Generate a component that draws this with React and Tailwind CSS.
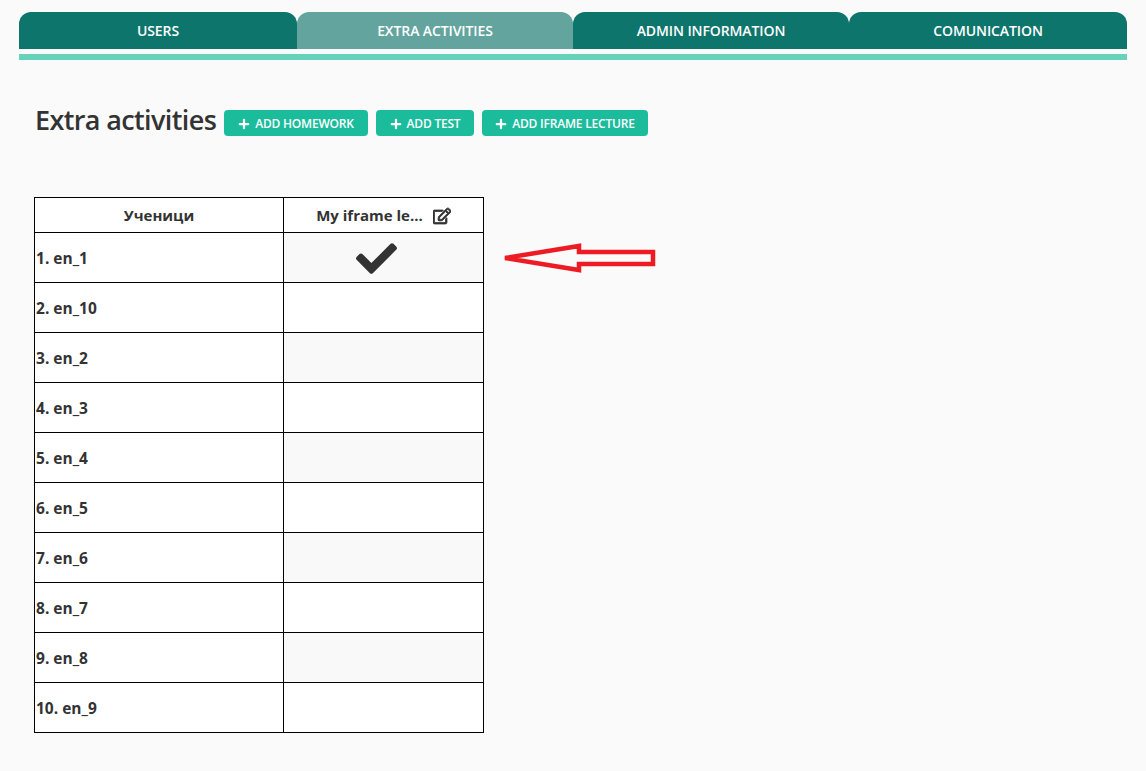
import React from "react";
import { FaCheck, FaPlus, FaRegEdit } from "react-icons/fa";

const tabs = [
  { label: "USERS", width: "w-[278px]" },
  { label: "EXTRA ACTIVITIES", width: "w-[276px]", active: true },
  { label: "ADMIN INFORMATION", width: "w-[276px]" },
  { label: "COMUNICATION", width: "w-[278px]" },
];

const students = ["en_1", "en_10", "en_2", "en_3", "en_4", "en_5", "en_6", "en_7", "en_8", "en_9"];

function AddButton({ label, width }) {
  return (
    <button className={`flex h-[26px] items-center justify-center gap-[5px] rounded-[4px] bg-[#1abc9c] pt-[1px] text-[12px] font-semibold tracking-[-0.2px] text-white ${width}`}>
      <FaPlus size={12} />
      {label}
    </button>
  );
}

export default function App() {
  return (
    <div className="relative h-[771px] w-[1146px] overflow-hidden bg-[#fafafa] pt-3 font-['Open_Sans',sans-serif] text-[#333]">
      {/* Tabs */}
      <div className="ml-[19px] flex w-[1108px]">
        {tabs.map((t) => (
          <div
            key={t.label}
            className={`flex h-[37px] items-center justify-center rounded-t-[12px] text-[14px] font-semibold tracking-[-0.1px] text-white ${t.width} ${t.active ? "bg-[#63a59e]" : "bg-[#0e756c]"}`}
          >
            {t.label}
          </div>
        ))}
      </div>
      <div className="ml-[19px] mt-[5px] h-[6px] w-[1108px] bg-[#66d2ba]" />

      {/* Heading */}
      <div className="ml-[35px] mt-[47px] flex h-[32px] items-center">
        <h1 className="mr-2 mb-[7px] w-[181px] text-[27px] leading-none font-semibold tracking-[-0.62px] whitespace-nowrap text-[#333]">Extra activities</h1>
        <div className="flex gap-2">
          <AddButton label="ADD HOMEWORK" width="w-[144px]" />
          <AddButton label="ADD TEST" width="w-[98px]" />
          <AddButton label="ADD IFRAME LECTURE" width="w-[166px]" />
        </div>
      </div>

      {/* Table */}
      <table className="ml-[34px] mt-[58px] w-[450px] table-fixed border-collapse bg-white text-[15.5px] font-bold">
        <thead>
          <tr className="h-[35px]">
            <th className="w-[249px] border border-black pt-[1px] text-center text-[15px] font-bold">Ученици</th>
            <th className="border border-black pt-[1px] text-[15px] font-bold">
              <div className="flex items-center justify-center gap-[10px]">
                <span>My iframe le...</span>
                <FaRegEdit size={18} stroke="currentColor" strokeWidth={24} />
              </div>
            </th>
          </tr>
        </thead>
        <tbody>
          {students.map((s, i) => (
            <tr key={s} className="h-[50px]">
              <td className="border border-black pt-[2px] pl-[1px]">{i + 1}. {s}</td>
              <td className={`border border-black pt-[1px] text-center ${i % 2 === 0 ? "bg-[#f9f9f9]" : "bg-white"}`}>
                {i === 0 && <FaCheck size={41} className="ml-[72px]" />}
              </td>
            </tr>
          ))}
        </tbody>
      </table>

      {/* Red annotation arrow */}
      <svg width="160" height="34" viewBox="0 0 160 34" className="absolute left-[500px] top-[241px]">
        <path d="M5 17 L79 5 L79 11 L153 11 L153 23 L79 23 L79 29 Z" fill="none" stroke="#ed1c24" strokeWidth="4.5" />
      </svg>
    </div>
  );
}
